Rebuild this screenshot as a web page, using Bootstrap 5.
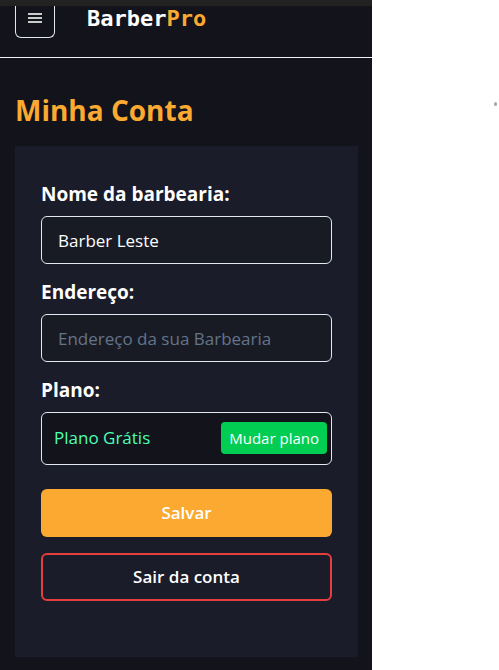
<!DOCTYPE html>
<html lang="pt-BR">
<head>
<meta charset="utf-8">
<meta name="viewport" content="width=device-width, initial-scale=1">
<title>BarberPro - Minha Conta</title>
<link href="https://cdn.jsdelivr.net/npm/bootstrap@5.3.0/dist/css/bootstrap.min.css" rel="stylesheet">
<style>
  body { font-family: "Open Sans", "Noto Sans", sans-serif; color: #fff; background: #fff; }
  .app { background: #12131b; border-top: 6px solid #222223; min-width: 0; }
  .side { width: 127px; padding-top: 102px; padding-right: 2px; }
  .speck { width: 3px; height: 4px; border-radius: 2px; background: #aaa; }
  .topbar { height: 52px; padding: 0 15px; gap: 32px; border-bottom: 1px solid #edf2f7; }
  .menu-btn { width: 40px; height: 32px; padding: 0 0 8px; border: 1px solid #e2e8f0; border-top: 0; border-radius: 0 0 6px 6px; background: transparent; color: #c8ccca; }
  .brand { font: bold 22px/26px "DejaVu Sans Mono", monospace; color: #fff; }
  .brand span, .title { color: #fba931; }
  .main { padding: 32px 14px 13px 15px; }
  .title { font-size: 28px; line-height: 40px; font-weight: 700; margin: 0 0 16px; }
  .panel { background: #1b1c29; padding: 34px 26px 56px; }
  .field-label { font-size: 19px; line-height: 28px; font-weight: 700; margin-bottom: 8px; }
  .field, .field:focus { height: 48px; margin-bottom: 14px; padding: 0 16px; font-size: 17px; color: #fff; background: #181b23; border: 1px solid #e2e8f0; border-radius: 6px; }
  .field::placeholder { color: #64748b; opacity: 1; }
  .plan { height: 53px; padding: 0 4px 2px 12px; margin-bottom: 24px; background: #12131b; border: 1px solid #e2e8f0; border-radius: 6px; font-size: 17px; color: #4dffb4; }
  .plan-link { height: 32px; padding: 0 8px; border-radius: 4px; background: #00cd52; color: #fff; font-size: 15px; line-height: 32px; }
  .action { height: 48px; padding: 0; border-radius: 6px; font-size: 17px; font-weight: 600; color: #fff; }
  .save { background: #fba931; }
  .leave { border: 2px solid #e53e3e; }
</style>
</head>
<body>
<div class="d-flex min-vh-100">
  <div class="app flex-fill">
    <header class="topbar d-flex align-items-start">
      <button class="menu-btn d-flex align-items-center justify-content-center" type="button" aria-label="Abrir menu">
        <svg width="14" height="12" viewBox="0 0 14 12" fill="currentColor" aria-hidden="true"><path d="M0 1h14v2H0zM0 5h14v2H0zM0 9h14v2H0z"/></svg>
      </button>
      <a class="brand text-decoration-none" href="#">Barber<span>Pro</span></a>
    </header>
    <main class="main">
      <h1 class="title">Minha Conta</h1>
      <form class="panel">
        <label class="field-label d-block" for="nome">Nome da barbearia:</label>
        <input class="field form-control" id="nome" type="text" value="Barber Leste">
        <label class="field-label d-block" for="endereco">Endereço:</label>
        <input class="field form-control" id="endereco" type="text" placeholder="Endereço da sua Barbearia">
        <div class="field-label">Plano:</div>
        <div class="plan d-flex align-items-center justify-content-between">
          <span>Plano Grátis</span>
          <a class="plan-link text-decoration-none text-nowrap" href="#">Mudar plano</a>
        </div>
        <button class="action save btn w-100 border-0 mb-3" type="submit">Salvar</button>
        <button class="action leave btn w-100" type="button">Sair da conta</button>
      </form>
    </main>
  </div>
  <div class="side d-flex justify-content-end flex-shrink-0"><span class="speck"></span></div>
</div>
<script src="https://cdn.jsdelivr.net/npm/bootstrap@5.3.0/dist/js/bootstrap.bundle.min.js"></script>
</body>
</html>
